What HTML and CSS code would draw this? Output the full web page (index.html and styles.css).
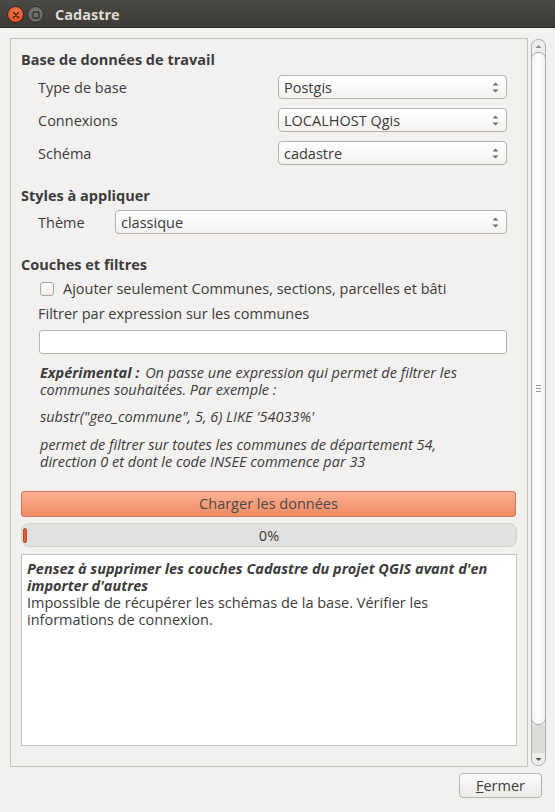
FILE: index.html
```html
<!DOCTYPE html>
<html lang="fr">
<head>
<meta charset="utf-8">
<title>Cadastre</title>
<link rel="stylesheet" href="styles.css">
</head>
<body>
<div class="window">
  <div class="titlebar">
    <span class="wbtn close"><svg width="10" height="10" viewBox="0 0 10 10"><path d="M2.5 2.5 L7.5 7.5 M7.5 2.5 L2.5 7.5" stroke="#3a1a0e" stroke-width="1.4" stroke-linecap="round"/></svg></span>
    <span class="wbtn maxi"><svg width="10" height="10" viewBox="0 0 10 10"><rect x="2" y="2" width="6" height="6" rx="1" fill="none" stroke="#2f2e2b" stroke-width="1.3"/></svg></span>
    <span class="title">Cadastre</span>
  </div>
  <div class="main">
    <div class="scrollwrap">
      <div class="frame">
        <h2 class="heading first">Base de données de travail</h2>
        <div class="rows r1">
          <div class="row"><span class="lbl">Type de base</span><div class="combo"><span>Postgis</span><svg class="arrows" width="7" height="11" viewBox="0 0 7 11"><path d="M0.5 3.5 L3.5 0.5 L6.5 3.5 Z M0.5 7.5 L3.5 10.5 L6.5 7.5 Z" fill="#6e6e6e"/></svg></div></div>
          <div class="row"><span class="lbl">Connexions</span><div class="combo"><span>LOCALHOST Qgis</span><svg class="arrows" width="7" height="11" viewBox="0 0 7 11"><path d="M0.5 3.5 L3.5 0.5 L6.5 3.5 Z M0.5 7.5 L3.5 10.5 L6.5 7.5 Z" fill="#6e6e6e"/></svg></div></div>
          <div class="row"><span class="lbl">Schéma</span><div class="combo"><span>cadastre</span><svg class="arrows" width="7" height="11" viewBox="0 0 7 11"><path d="M0.5 3.5 L3.5 0.5 L6.5 3.5 Z M0.5 7.5 L3.5 10.5 L6.5 7.5 Z" fill="#6e6e6e"/></svg></div></div>
        </div>
        <h2 class="heading">Styles à appliquer</h2>
        <div class="rows">
          <div class="row theme"><span class="lbl">Thème</span><div class="combo"><span>classique</span><svg class="arrows" width="7" height="11" viewBox="0 0 7 11"><path d="M0.5 3.5 L3.5 0.5 L6.5 3.5 Z M0.5 7.5 L3.5 10.5 L6.5 7.5 Z" fill="#6e6e6e"/></svg></div></div>
        </div>
        <h2 class="heading">Couches et filtres</h2>
        <div class="indent">
          <label class="check"><span class="box"></span>Ajouter seulement Communes, sections, parcelles et bâti</label>
          <div class="flabel">Filtrer par expression sur les communes</div>
          <div class="input"></div>
          <p class="note p1"><b>Expérimental :</b> On passe une expression qui permet de filtrer les communes souhaitées. Par exemple :</p>
          <p class="note p2">substr("geo_commune", 5, 6) LIKE '54033%'</p>
          <p class="note p3">permet de filtrer sur toutes les communes de département 54, direction 0 et dont le code INSEE commence par 33</p>
        </div>
        <div class="charger">Charger les données</div>
        <div class="progress"><span class="chunk"></span><span class="pct">0%</span></div>
        <div class="log">
          <b><i>Pensez à supprimer les couches Cadastre du projet QGIS avant d'en importer d'autres</i></b><br>
          Impossible de récupérer les schémas de la base. Vérifier les informations de connexion.
        </div>
      </div>
      <div class="scrollbar">
        <div class="sb-up"><svg width="7" height="5" viewBox="0 0 7 5"><path d="M0.5 4 L3.5 1 L6.5 4 Z" fill="#8a8a8a"/></svg></div>
        <div class="sb-thumb"><span class="grip"></span></div>
        <div class="sb-track"></div>
        <div class="sb-down"><svg width="7" height="5" viewBox="0 0 7 5"><path d="M0.5 1 L3.5 4 L6.5 1 Z" fill="#555"/></svg></div>
      </div>
    </div>
    <div class="footer">
      <div class="btn"><u>F</u>ermer</div>
    </div>
  </div>
</div>
</body>
</html>
```
FILE: styles.css
```css
* { box-sizing: border-box; }
html, body { margin: 0; padding: 0; }
body {
  width: 555px;
  height: 812px;
  overflow: hidden;
  background: #f2f1f0;
  font-family: "Open Sans", "DejaVu Sans", sans-serif;
  font-size: 14.5px;
  color: #3c3c3c;
}
.window { width: 555px; height: 812px; display: flex; flex-direction: column; }
.titlebar {
  height: 28px;
  background: linear-gradient(#4a4944, #3c3b37);
  display: flex;
  align-items: center;
  padding-left: 7px;
  border-bottom: 1px solid #2b2a27;
}
.wbtn {
  width: 17px; height: 17px; border-radius: 50%;
  display: flex; align-items: center; justify-content: center;
  margin-right: 3px;
  margin-top: 2px;
}
.close { background: radial-gradient(circle at 50% 35%, #f47a50, #e0461c); border: 1px solid #3a2418; }
.maxi { background: radial-gradient(circle at 50% 35%, #7b7a75, #5a5955); border: 1px solid #2e2d2a; }
.title {
  margin-left: 8px;
  color: #dfdbd2;
  font-weight: bold;
  font-size: 14.5px;
  margin-top: 1px;
}
.main { flex: 1; padding: 10px 8px 0 10px; display: flex; flex-direction: column; }
.scrollwrap { display: flex; height: 729px; }
.frame {
  width: 518px;
  border: 1px solid #c4c2bf;
  padding: 10px 10px 0 10px;
}
.heading {
  margin: 0;
  font-size: 14.5px;
  font-weight: bold;
  line-height: 17px;
  height: 19px;
  padding-top: 2px;
  margin-top: 20px;
}
.heading.first { margin-top: 0; }
.rows { padding-left: 17px; padding-right: 10px; margin-top: 6px; display: flex; flex-direction: column; gap: 9px; }
.rows.r1 { margin-top: 7px; }
.row { display: flex; align-items: center; height: 24px; }
.lbl { width: 240px; }
.theme .lbl { width: 77px; }
.combo {
  flex: 1;
  height: 24px;
  border: 1px solid #b6b3ae;
  border-radius: 4px;
  background: linear-gradient(#ffffff, #f3f2f1);
  display: flex;
  align-items: center;
  padding-left: 5px;
}
.combo span { flex: 1; }
.arrows { display: block; margin-right: 7px; }
.indent { padding-left: 17px; padding-right: 10px; }
.check { display: flex; align-items: center; height: 17px; margin-top: 7px; padding-left: 2px; }
.box {
  width: 14px; height: 14px;
  border: 1px solid #a9a6a1;
  border-radius: 3px;
  background: linear-gradient(#fdfdfd, #eeedec);
  margin-right: 9px;
}
.flabel { height: 17px; line-height: 17px; margin-top: 8px; }
.input {
  height: 24px;
  margin-top: 8px;
  margin-left: 1px;
  border: 1px solid #b6b3ae;
  border-radius: 3px;
  background: #fff;
}
.note {
  margin: 0;
  font-style: italic;
  line-height: 17px;
  padding-left: 2px;
  padding-right: 20px;
}
.note b { font-weight: bold; margin-right: 2px; }
.p1 { margin-top: 10px; }
.p2 { margin-top: 10px; }
.p3 { margin-top: 11px; padding-right: 40px; }
.charger {
  margin-top: 21px;
  height: 26px;
  border: 1px solid #c9775a;
  border-radius: 3px;
  background: linear-gradient(#fbb193, #f18c64);
  text-align: center;
  line-height: 24px;
  color: #4a4a4a;
  margin-right: 1px;
}
.progress {
  margin-top: 6px;
  height: 24px;
  border: 1px solid #d4d2cf;
  border-radius: 8px;
  background: #e2e1df;
  position: relative;
  display: flex;
  align-items: center;
  justify-content: center;
}
.chunk {
  position: absolute;
  left: 1px; top: 4px;
  width: 4px; height: 15px;
  border-radius: 2px;
  background: #e8602e;
  border: 1px solid #b8502a;
}
.log {
  margin-top: 7px;
  height: 192px;
  border: 1px solid #c4c2bf;
  background: #fff;
  padding: 5px 5px;
  line-height: 17px;
}
.log b { font-weight: bold; }
.scrollbar {
  margin-left: 3px;
  margin-top: 1px;
  width: 15px;
  height: 727px;
  border: 1px solid #b0aeab;
  border-radius: 7px;
  background: #eeedec;
  display: flex;
  flex-direction: column;
  overflow: hidden;
}
.sb-up, .sb-down { height: 12px; display: flex; align-items: center; justify-content: center; }
.sb-thumb {
  height: 673px;
  border: 1px solid #a8a6a3;
  border-radius: 7px;
  margin: 0 -1px;
  background: linear-gradient(to right, #f4f4f4, #fdfdfd 50%, #f0f0f0);
  display: flex; align-items: center; justify-content: center;
}
.grip {
  width: 5px; height: 7px;
  background: linear-gradient(#999 0 1px, transparent 1px 3px, #999 3px 4px, transparent 4px 6px, #999 6px 7px);
}
.sb-track { flex: 1; background: #dcdbd9; }
.footer { display: flex; justify-content: flex-end; padding-right: 5px; margin-top: 6px; }
.btn {
  width: 83px; height: 25px;
  border: 1px solid #b6b3ae;
  border-radius: 4px;
  background: linear-gradient(#fbfbfb, #ebeae9);
  text-align: center;
  line-height: 23px;
}
.btn u { text-decoration-thickness: 1px; }
```
